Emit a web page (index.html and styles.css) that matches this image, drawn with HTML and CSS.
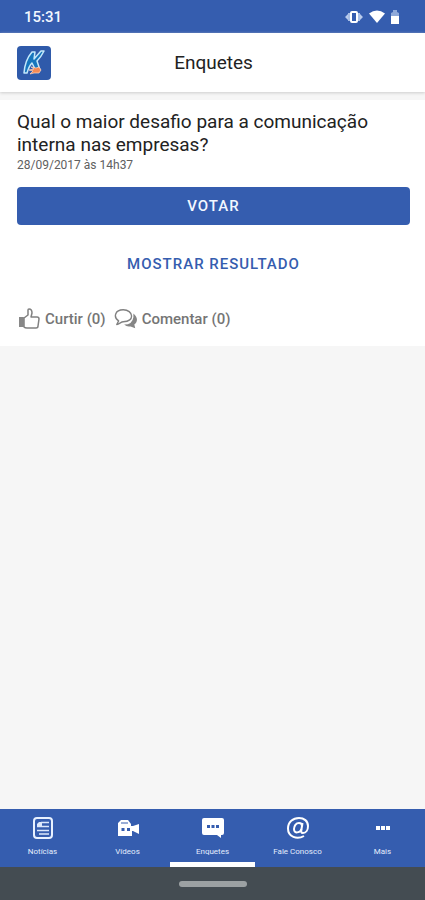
FILE: index.html
```html
<!DOCTYPE html>
<html lang="pt-BR">
<head>
<meta charset="utf-8">
<meta name="viewport" content="width=device-width, initial-scale=1">
<title>Enquetes</title>
<link rel="stylesheet" href="styles.css">
</head>
<body>
<div class="status">
  <span>15:31</span>
  <div class="status-icons">
    <svg width="18" height="14" viewBox="0 0 18 14"><path d="M0 7l3-3v6zM18 7l-3-3v6z" fill="#b9cbec"/><rect x="3" y="3" width="2" height="8" fill="#a9bfe6"/><rect x="13" y="3" width="2" height="8" fill="#a9bfe6"/><rect x="6" y="2" width="6" height="10" rx="1" fill="#355daf" stroke="#fff" stroke-width="2"/></svg>
    <svg width="16" height="14" viewBox="0 0 16 14"><path d="M0 3.500Q8-2.500 16 3.500L8 13z" fill="#fff"/></svg>
    <svg width="8" height="14" viewBox="0 0 8 14"><path d="M0 3l2-1V0h4v2l2 1v4H0z" fill="#8fa9da"/><path d="M0 6h8v8H0z" fill="#fff"/></svg>
  </div>
</div>
<header class="header">
  <svg class="logo" viewBox="0 0 34 34" role="img" aria-label="Logo"><rect width="34" height="34" rx="4" fill="#2f5aaa"/><path d="M7 27Q8 14 15 6l3 0-1 7 7-8 3 0q-3 6-7 10l3 9-4 1-4-8q-3 3-5 10z" fill="#1676bd" stroke="#c4e8fa" stroke-width="1.500" stroke-linejoin="round"/><path d="M12 24l5-1-3-2 5 1 3-1 2 3-2 3h-5l-4 1 3-3z" fill="#f58a55" stroke="#ffd9c4" stroke-width=".7"/></svg>
  <h1>Enquetes</h1>
</header>
<main class="content">
  <article class="poll">
    <h2>Qual o maior desafio para a comunicação interna nas empresas?</h2>
    <time datetime="2017-09-28T14:37">28/09/2017 às 14h37</time>
    <button class="vote" type="button">VOTAR</button>
    <button class="result" type="button">MOSTRAR RESULTADO</button>
    <div class="actions">
      <button type="button"><svg width="24" height="22" viewBox="0 0 24 22"><path d="M2 9h5v10H2z" fill="#999"/><path d="M3 9v10M5 9v10" stroke="#777"/><path d="M7 10l4-3V2q0-1 1-1 3 0 3 4l-1 4h6q2 0 2 2l-1 7q0 2-2 2h-9q-2 0-3-1z" fill="#fff" stroke="#818181" stroke-width="1.500" stroke-linejoin="round"/></svg>Curtir (0)</button>
      <button type="button"><svg width="24" height="22" viewBox="0 0 26 22"><path d="M21 5c5 4 5 9 1 12l1 4-5-2q-4 1-7-2 9 0 10-8z" fill="#858585"/><path d="M3 17l2-4C-1 9 1 1 10 1c11 0 13 13 0 13-2 0-4 2-7 3z" fill="#fff" stroke="#818181" stroke-width="1.500" stroke-linejoin="round"/></svg>Comentar (0)</button>
    </div>
  </article>
</main>
<nav class="tabs">
  <a href="#noticias"><svg width="22" height="22" viewBox="0 0 22 22"><rect x="2" y="1" width="18" height="20" rx="3" fill="none" stroke="#e8f1ff" stroke-width="2"/><path d="M9 5.500h8M5 9.500h12M5 13.500h12M7 17h10" stroke="#dbe7fb" stroke-width="1.700"/><path d="M5 9V7l2-2h3v4z" fill="#dbe7fb"/></svg>Notícias</a>
  <a href="#videos"><svg width="22" height="22" viewBox="0 0 22 22"><path d="M1 6l3-3h7l3 4v2h2l6-2v10l-6-3h-1v5H1z" fill="#fff"/><path d="M4 6h7" stroke="#355daf"/><path d="M4.500 11h3v3h-3zM10 11h3v3h-3z" fill="#355daf"/></svg>Vídeos</a>
  <a class="active" href="#enquetes" aria-current="page"><svg width="22" height="22" viewBox="0 0 22 22"><path d="M2 1h18q2 0 2 2v13q0 2-2 2h-1v3l-4-3H2q-2 0-2-2V3q0-2 2-2z" fill="#fff"/><path d="M5 8h3v3H5zM9.500 8h3v3h-3zM14 8h3v3h-3z" fill="#355daf"/></svg>Enquetes</a>
  <a href="#fale-conosco"><svg width="22" height="22" viewBox="0 0 22 22" fill="none" stroke="#fff" stroke-width="2"><path d="M17 19C10 23 1 20 1 11.500 1 5 6 1 12 1c5 0 9 3 9 8 0 4-2 7-5 7-2 0-2-1-1.500-4L15.500 6"/><path d="M15 9c0-2-1-3-3-3-3 0-5 3-5 6 0 5 6 4 7.500 0"/></svg>Fale Conosco</a>
  <a href="#mais"><svg width="22" height="22" viewBox="0 0 22 22"><path d="M4 9h4v4H4zM9 9h4v4H9zM14 9h4v4h-4z" fill="#fff"/></svg>Mais</a>
</nav>
<div class="system"><span class="handle"></span></div>
</body>
</html>
```

FILE: styles.css
```css
* { box-sizing: border-box; }
body {
  margin: 0;
  min-height: 100vh;
  display: flex;
  flex-direction: column;
  background: #f6f6f6;
  color: #222;
  font-family: Roboto, "Liberation Sans", sans-serif;
}
h1, h2 { margin: 0; font-weight: 400; }
button { border: 0; padding: 0; background: none; font: inherit; cursor: pointer; }
svg { display: block; flex: none; }
.status {
  display: flex;
  align-items: center;
  justify-content: space-between;
  height: 33px;
  padding: 0 26px 0 24px;
  background: #355daf;
  color: #f2f7ff;
  font-size: 15px;
  font-weight: 500;
}
.status-icons { display: flex; align-items: center; gap: 6px; }
.header {
  display: grid;
  grid-template-columns: 34px 1fr 34px;
  align-items: center;
  height: 59px;
  padding: 0 15px 0 17px;
  background: #fff;
  box-shadow: 0 1px 3px #ccc;
}
.logo { width: 34px; height: 34px; }
h1 { font-size: 19px; line-height: 22px; text-align: center; }
.content { flex: 1; padding-top: 8px; }
.poll {
  display: flex;
  flex-direction: column;
  padding: 10px 15px 16px 17px;
  background: #fff;
}
h2 { font-size: 19px; line-height: 23px; }
time { font-size: 12px; line-height: 18px; color: #606060; }
.vote, .result {
  height: 38px;
  border-radius: 4px;
  font-size: 15px;
  font-weight: 500;
  letter-spacing: 1px;
}
.vote { margin-top: 13px; background: #355daf; color: #f2f7ff; }
.result { margin-top: 20px; color: #355daf; }
.actions { display: flex; gap: 8px; margin-top: 25px; }
.actions button {
  display: flex;
  align-items: center;
  gap: 4px;
  height: 22px;
  color: #757575;
  font-size: 15px;
  font-weight: 500;
}
.tabs {
  display: grid;
  grid-template-columns: repeat(5, 1fr);
  height: 58px;
  background: #355daf;
}
.tabs a {
  display: flex;
  flex-direction: column;
  align-items: center;
  gap: 7px;
  padding-top: 8px;
  border-bottom: 5px solid transparent;
  color: #e4edfd;
  font-size: 8px;
  line-height: 12px;
  text-decoration: none;
  white-space: nowrap;
}
.tabs .active { border-color: #fff; }
.system {
  display: flex;
  align-items: center;
  justify-content: center;
  height: 33px;
  background: #444c52;
}
.handle { width: 68px; height: 6px; border-radius: 3px; background: #9ca1a3; }
```
